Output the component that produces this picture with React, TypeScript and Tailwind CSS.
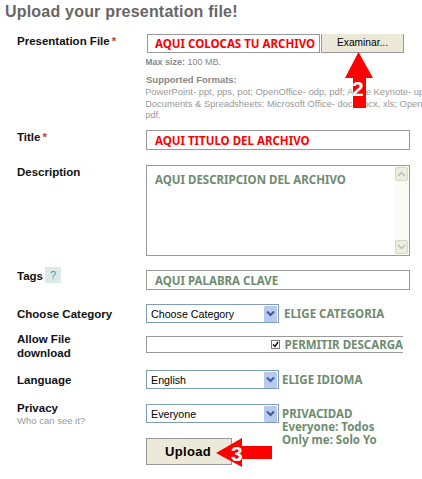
const A = "font-['Liberation_Sans',Arial,sans-serif]";
const N = "font-['Noto_Sans',sans-serif] font-bold text-[11.5px] leading-[13px] whitespace-nowrap";

function Select({ label }: { label: string }) {
  return (
    <div className="flex h-[19px] w-[133px] shrink-0 items-center justify-between border border-[#7f9db9] bg-white pl-[4px] pr-px text-[10.7px] text-black">
      <span>{label}</span>
      <span className="flex h-[16px] w-[13px] items-center justify-center rounded-[1px] border border-[#b5c8ee] bg-[#b9caf0]">
        <svg width="9" height="7" viewBox="0 0 9 7"><path d="M1 1.5 L4.5 5 L8 1.5" fill="none" stroke="#3f5b96" strokeWidth="2" /></svg>
      </span>
    </div>
  );
}

function Label({ children }: { children: React.ReactNode }) {
  return <div className="w-[146px] shrink-0 pl-[17px] pr-[20px] text-[11.5px] font-bold leading-[14px] text-[#111]">{children}</div>;
}

function Star() {
  return <span className="ml-[2px] text-[#c0392b]">*</span>;
}

function Star2({ text }: { text: string }) {
  return <span className="whitespace-nowrap">{text}<Star /></span>;
}

function Arrow({ dir }: { dir: "up" | "down" }) {
  return (
    <span className="flex h-[14px] w-[13px] items-center justify-center rounded-[2px] border border-[#d8d8c8] bg-[#eeeedd]">
      <svg width="9" height="6" viewBox="0 0 9 6">
        <path d={dir === "up" ? "M1 5 L4.5 1.5 L8 5" : "M1 1 L4.5 4.5 L8 1"} fill="none" stroke="#bbb" strokeWidth="1.5" />
      </svg>
    </span>
  );
}

export default function App() {
  return (
    <div className={`relative h-[479px] w-[422px] overflow-hidden bg-white ${A}`}>
      <h1 className="pl-[5px] pt-[3px] text-[16px] font-bold leading-[18px] tracking-[0.2px] text-[#666]">Upload your presentation file!</h1>

      <div className="mt-[13px] flex">
        <Label><Star2 text="Presentation File" /></Label>
        <div className="min-w-0 flex-1 overflow-hidden">
          <div className="flex gap-px pl-px">
            <div className={`flex h-[19px] w-[173px] shrink-0 items-center border border-[#999] pl-[7px] text-[#f00] ${N}`}>AQUI COLOCAS TU ARCHIVO</div>
            <div className="flex h-[19px] w-[83px] shrink-0 items-center justify-center border border-[#999] border-t-0 bg-[#ece9d8] text-[10.2px] text-black">Examinar...</div>
          </div>
          <p className="-ml-px mt-[3px] text-[9px] font-bold leading-[13px] text-[#888]">Max size: <span className="font-normal">100 MB.</span></p>
          <p className="mt-[5px] text-[9.5px] font-bold leading-[12px] text-[#888]">Supported Formats:</p>
          <div className="-ml-px w-[320px] whitespace-nowrap text-[9.4px] leading-[11.7px] text-[#999]">
            <p>PowerPoint- ppt, pps, pot; OpenOffice- odp, pdf; Apple Keynote- upload</p>
            <p>Documents &amp; Spreadsheets: Microsoft Office- doc, docx, xls; OpenOffice-</p>
            <p>pdf.</p>
          </div>
        </div>
      </div>

      <div className="mt-[9px] flex">
        <Label><Star2 text="Title" /></Label>
        <div className={`flex h-[20px] w-[264px] items-center border border-[#999] pl-[8px] text-[#f00] ${N}`}>AQUI TITULO DEL ARCHIVO</div>
      </div>

      <div className="mt-[15px] flex">
        <Label>Description</Label>
        <div className="flex h-[91px] w-[264px] justify-between border border-[#999] bg-white">
          <div className={`pl-[8px] pt-[7px] text-[#6f8c6f] ${N}`}>AQUI DESCRIPCION DEL ARCHIVO</div>
          <div className="flex w-[14px] flex-col justify-between bg-[#fbfbf6] py-px">
            <Arrow dir="up" />
            <Arrow dir="down" />
          </div>
        </div>
      </div>

      <div className="mt-[14px] flex">
        <div className="flex w-[146px] shrink-0 items-start gap-[2px] pl-[17px] text-[11.5px] font-bold leading-[14px] text-[#111]">
          <span className="-mt-px">Tags</span>
          <span className="-mt-[3px] flex h-[16px] w-[16px] items-center justify-center bg-[#dcebe6] text-[11px] font-normal text-[#2ba3b8]">?</span>
        </div>
        <div className={`flex h-[20px] w-[264px] items-center border border-[#999] pl-[8px] text-[#6f8c6f] ${N}`}>AQUI PALABRA CLAVE</div>
      </div>

      <div className="mt-[14px] flex items-center">
        <Label><span className="whitespace-nowrap">Choose Category</span></Label>
        <Select label="Choose Category" />
        <span className={`ml-[5px] text-[#6f8c6f] ${N}`}>ELIGE CATEGORIA</span>
      </div>

      <div className="mt-[9px] flex">
        <Label>Allow File download</Label>
        <div className="mt-[4px] flex h-[17px] w-[257px] items-center justify-end border border-[#999] border-r-0">
          <span className="mr-[5px] flex h-[9px] w-[9px] items-center justify-center border border-[#777] bg-white">
            <svg width="7" height="7" viewBox="0 0 7 7"><path d="M1 3.5 L3 5.5 L6 1" fill="none" stroke="#000" strokeWidth="1.4" /></svg>
          </span>
          <span className={`text-[#6f8c6f] ${N}`}>PERMITIR DESCARGA</span>
        </div>
      </div>

      <div className="mt-[10px] flex items-center">
        <Label>Language</Label>
        <Select label="English" />
        <span className={`ml-[3px] text-[#6f8c6f] ${N}`}>ELIGE IDIOMA</span>
      </div>

      <div className="mt-[15px] flex">
        <div className="-mt-[3px] w-[146px] shrink-0 pl-[17px]">
          <div className="text-[11.5px] font-bold leading-[14px] text-[#111]">Privacy</div>
          <div className="text-[9.5px] leading-[12px] text-[#999]">Who can see it?</div>
        </div>
        <Select label="Everyone" />
        <div className={`ml-[3px] pt-[3px] text-[#6f8c6f] ${N}`}>PRIVACIDAD<br />Everyone: Todos<br />Only me: Solo Yo</div>
      </div>

      <button className="ml-[146px] -mt-[8px] block h-[27px] w-[86px] border border-[#999] bg-[#ece9d8] text-[13px] font-bold tracking-[0.3px] text-black">
        <span className="-ml-[2px]">Upload</span>
      </button>

      {/* annotation arrow 2 */}
      <svg className="absolute left-[344px] top-[52px]" width="30" height="56" viewBox="0 0 30 56">
        <path d="M14.5 0 L29 26 L22 26 L22 56 L9 56 L9 26 L1 26 Z" fill="#f00" />
      </svg>
      <span className="absolute left-[352px] top-[78px] text-[21px] font-bold leading-[22px] text-white">2</span>

      {/* annotation arrow 3 */}
      <svg className="absolute left-[216px] top-[438px]" width="57" height="29" viewBox="0 0 57 29">
        <path d="M0 15 L26 0 L26 8 L56 8 L56 21 L26 21 L26 29 Z" fill="#f00" />
      </svg>
      <span className="absolute left-[231px] top-[443px] text-[21px] font-bold leading-[22px] text-white">3</span>
    </div>
  );
}
